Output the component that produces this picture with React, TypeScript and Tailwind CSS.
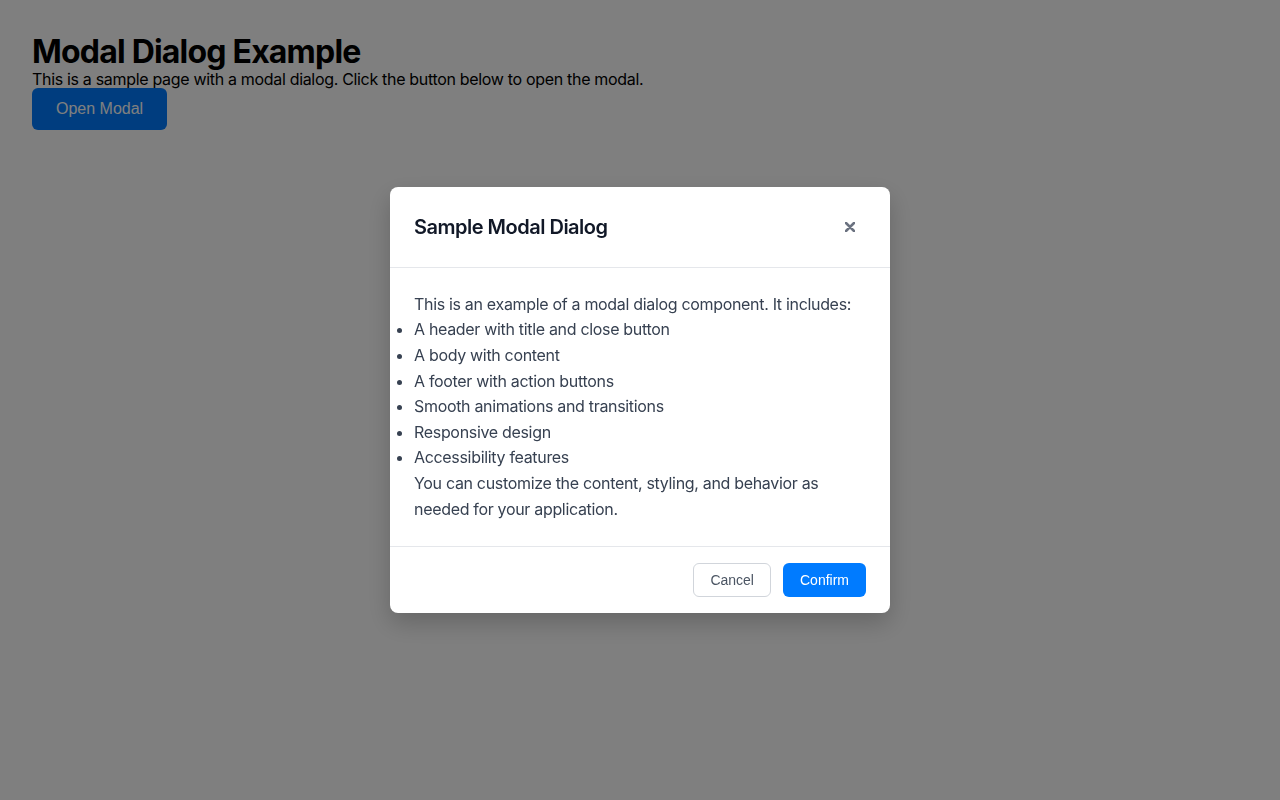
import React from "react";

export default function App() {
  const items = [
    "A header with title and close button",
    "A body with content",
    "A footer with action buttons",
    "Smooth animations and transitions",
    "Responsive design",
    "Accessibility features",
  ];
  return (
    <div
      className="relative min-h-[800px] bg-white p-8 tracking-[-0.02em]"
      style={{ fontFamily: "Inter, 'Noto Sans', sans-serif" }}
    >
      <h1 className="m-0 pt-[2px] text-[32px] font-bold leading-[36px] tracking-[-0.025em] text-black">
        Modal Dialog Example
      </h1>
      <p className="m-0 text-base leading-[18px] text-black">
        This is a sample page with a modal dialog. Click the button below to open the modal.
      </p>
      <button
        className="h-[42px] rounded-md bg-[#007bff] px-6 text-base tracking-normal text-white"
        style={{ fontFamily: "'Liberation Sans', Arial, sans-serif" }}
      >
        Open Modal
      </button>

      <div className="fixed inset-0 flex items-center justify-center bg-black/50">
        <div className="w-[500px] rounded-lg bg-white shadow-[0_10px_25px_rgba(0,0,0,0.2)]">
          <div className="flex items-center justify-between border-b border-[#e5e7eb] px-6 py-6">
            <h2 className="m-0 text-xl font-semibold leading-8 tracking-[-0.025em] text-[#111827]">
              Sample Modal Dialog
            </h2>
            <button className="flex h-8 w-8 items-center justify-center">
              <svg width="10" height="10" viewBox="0 0 10 10">
                <path d="M1 1 L9 9 M9 1 L1 9" stroke="#6b7280" strokeWidth="2.5" strokeLinecap="round" />
              </svg>
            </button>
          </div>
          <div className="p-6 text-base leading-[1.6] text-[#374151]">
            <p className="m-0">This is an example of a modal dialog component. It includes:</p>
            <ul className="m-0 list-outside list-disc p-0">
              {items.map((t) => (
                <li key={t}>{t}</li>
              ))}
            </ul>
            <p className="m-0">
              You can customize the content, styling, and behavior as needed for your application.
            </p>
          </div>
          <div
            className="flex justify-end gap-3 border-t border-[#e5e7eb] px-6 py-4 tracking-normal"
            style={{ fontFamily: "'Liberation Sans', Arial, sans-serif" }}
          >
            <button className="h-[34px] rounded-md border border-[#d1d5db] bg-white px-4 text-sm text-[#4b5563]">
              Cancel
            </button>
            <button className="h-[34px] rounded-md bg-[#007bff] px-[17px] text-sm text-white">Confirm</button>
          </div>
        </div>
      </div>
    </div>
  );
}
